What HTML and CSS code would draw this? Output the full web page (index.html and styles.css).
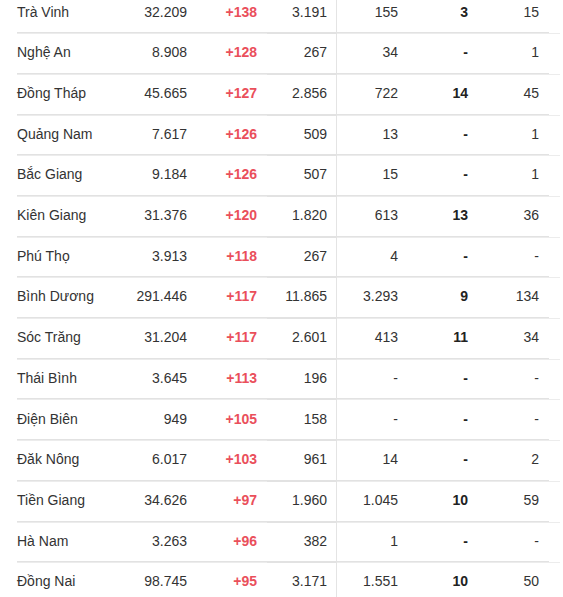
FILE: index.html
```html
<!DOCTYPE html>
<html lang="vi">
<head>
<meta charset="utf-8">
<link rel="stylesheet" href="styles.css">
</head>
<body>
<div class="table">
  <div class="row"><div class="c name">Trà Vinh</div><div class="c">32.209</div><div class="c red">+138</div><div class="c sep">3.191</div><div class="c">155</div><div class="c b">3</div><div class="c">15</div><div class="pad"></div></div>
  <div class="row"><div class="c name">Nghệ An</div><div class="c">8.908</div><div class="c red">+128</div><div class="c sep">267</div><div class="c">34</div><div class="c b">-</div><div class="c">1</div><div class="pad"></div></div>
  <div class="row"><div class="c name">Đồng Tháp</div><div class="c">45.665</div><div class="c red">+127</div><div class="c sep">2.856</div><div class="c">722</div><div class="c b">14</div><div class="c">45</div><div class="pad"></div></div>
  <div class="row"><div class="c name">Quảng Nam</div><div class="c">7.617</div><div class="c red">+126</div><div class="c sep">509</div><div class="c">13</div><div class="c b">-</div><div class="c">1</div><div class="pad"></div></div>
  <div class="row"><div class="c name">Bắc Giang</div><div class="c">9.184</div><div class="c red">+126</div><div class="c sep">507</div><div class="c">15</div><div class="c b">-</div><div class="c">1</div><div class="pad"></div></div>
  <div class="row"><div class="c name">Kiên Giang</div><div class="c">31.376</div><div class="c red">+120</div><div class="c sep">1.820</div><div class="c">613</div><div class="c b">13</div><div class="c">36</div><div class="pad"></div></div>
  <div class="row"><div class="c name">Phú Thọ</div><div class="c">3.913</div><div class="c red">+118</div><div class="c sep">267</div><div class="c">4</div><div class="c b">-</div><div class="c">-</div><div class="pad"></div></div>
  <div class="row"><div class="c name">Bình Dương</div><div class="c">291.446</div><div class="c red">+117</div><div class="c sep">11.865</div><div class="c">3.293</div><div class="c b">9</div><div class="c">134</div><div class="pad"></div></div>
  <div class="row"><div class="c name">Sóc Trăng</div><div class="c">31.204</div><div class="c red">+117</div><div class="c sep">2.601</div><div class="c">413</div><div class="c b">11</div><div class="c">34</div><div class="pad"></div></div>
  <div class="row"><div class="c name">Thái Bình</div><div class="c">3.645</div><div class="c red">+113</div><div class="c sep">196</div><div class="c">-</div><div class="c b">-</div><div class="c">-</div><div class="pad"></div></div>
  <div class="row"><div class="c name">Điện Biên</div><div class="c">949</div><div class="c red">+105</div><div class="c sep">158</div><div class="c">-</div><div class="c b">-</div><div class="c">-</div><div class="pad"></div></div>
  <div class="row"><div class="c name">Đăk Nông</div><div class="c">6.017</div><div class="c red">+103</div><div class="c sep">961</div><div class="c">14</div><div class="c b">-</div><div class="c">2</div><div class="pad"></div></div>
  <div class="row"><div class="c name">Tiền Giang</div><div class="c">34.626</div><div class="c red">+97</div><div class="c sep">1.960</div><div class="c">1.045</div><div class="c b">10</div><div class="c">59</div><div class="pad"></div></div>
  <div class="row"><div class="c name">Hà Nam</div><div class="c">3.263</div><div class="c red">+96</div><div class="c sep">382</div><div class="c">1</div><div class="c b">-</div><div class="c">-</div><div class="pad"></div></div>
  <div class="row"><div class="c name">Đồng Nai</div><div class="c">98.745</div><div class="c red">+95</div><div class="c sep">3.171</div><div class="c">1.551</div><div class="c b">10</div><div class="c">50</div><div class="pad"></div></div>
</div>
</body>
</html>
```

FILE: styles.css
```css
html, body {
  margin: 0;
  padding: 0;
  background: #ffffff;
}
body {
  font-family: "Liberation Sans", Arial, sans-serif;
  font-size: 14px;
  color: #333333;
  overflow: hidden;
}
.table {
  margin-top: -6.4px;
  margin-left: 17px;
  width: 543px;
}
.row {
  display: grid;
  grid-template-columns: 110px 70px 70px 70px 71px 70px 71px 11px;
  height: 40.69px;
  box-sizing: border-box;
  border-bottom: 1px solid #ececec;
}
.c {
  display: flex;
  align-items: center;
  justify-content: flex-end;
  padding-right: 10px;
  padding-bottom: 2.6px;
  box-sizing: border-box;
  border-bottom: 1px solid #e2e2e2;
  white-space: nowrap;
}
.name {
  justify-content: flex-start;
  padding-right: 0;
}
.red {
  color: #ea4f5b;
  font-weight: bold;
}
.b {
  font-weight: bold;
  color: #222222;
}
.sep {
  border-right: 1px solid #e4e4e4;
  padding-right: 9px;
  margin-bottom: -1px;
  border-bottom: 2px solid #e2e2e2;
}
```
